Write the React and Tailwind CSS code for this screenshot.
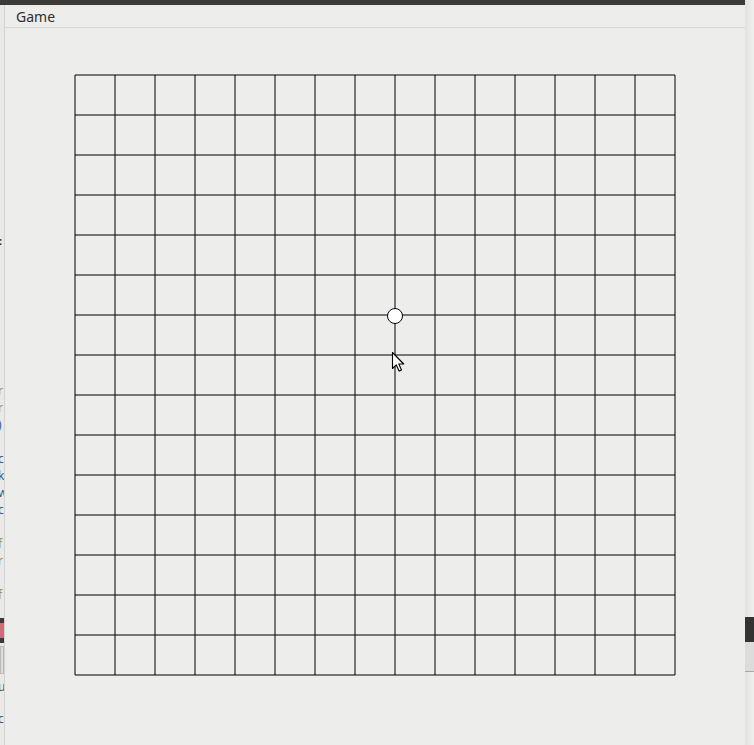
import React from "react";

function Board() {
  const x0 = 70, y0 = 47, cell = 40, n = 15;
  const lines = [];
  for (let i = 0; i <= n; i++) {
    const x = x0 + i * cell;
    const y = y0 + i * cell;
    lines.push(<line key={"v" + i} x1={x} y1={y0} x2={x} y2={y0 + n * cell} stroke="#000" strokeWidth="1" />);
    lines.push(<line key={"h" + i} x1={x0} y1={y} x2={x0 + n * cell} y2={y} stroke="#000" strokeWidth="1" />);
  }
  return (
    <svg width="740" height="717" className="block">
      {lines}
      <circle cx="390" cy="288" r="7.5" fill="#fff" stroke="#000" strokeWidth="1" />
      <g transform="translate(387.5,324.5)">
        <path d="M0 0 L0 16 L3.8 12.4 L6.6 18.6 L9 17.5 L6.3 11.5 L11.2 11.5 Z" fill="#fff" stroke="#000" strokeWidth="1.1" strokeLinejoin="round" />
      </g>
    </svg>
  );
}

function Frag({ c, color }) {
  return (
    <div className="h-[17px] leading-[17px] text-[12px] overflow-hidden whitespace-nowrap" style={{ color }}>
      <span className="inline-block -ml-[2px]">{c}</span>
    </div>
  );
}

export default function App() {
  const olive = "#9c962a";
  const blue = "#3a5a8c";
  return (
    <div className="flex w-[754px] h-[745px] overflow-hidden bg-[#ededec]" style={{ fontFamily: "'Noto Sans', 'DejaVu Sans', sans-serif" }}>
      <div className="flex flex-col w-[745px] h-[745px]">
        <div className="h-[5px] bg-[#3c3b37]" />
        <div className="flex flex-1">
          <div className="w-[5px] bg-[#e9e9e8] border-r border-[#d3d3d2] flex flex-col overflow-hidden">
            <div className="h-[230px]" />
            <div className="h-[12px] text-[11px] leading-[12px] text-[#3a3020] font-bold overflow-hidden">
              <span className="inline-block -ml-[1px]">:</span>
            </div>
            <div className="h-[135px]" />
            <Frag c="r" color={olive} />
            <Frag c="r" color={olive} />
            <Frag c=")" color={blue} />
            <div className="h-[17px]" />
            <Frag c="c" color={blue} />
            <Frag c="k" color={blue} />
            <Frag c="w" color={blue} />
            <Frag c="c" color={blue} />
            <div className="h-[17px]" />
            <Frag c="f" color={olive} />
            <Frag c="r" color={olive} />
            <div className="h-[17px]" />
            <Frag c="f" color={olive} />
            <div className="h-[15px]" />
            <div className="h-[25px] bg-[#3a3a3a] flex flex-col justify-center">
              <div className="h-[15px] bg-[#d46a78]" />
            </div>
            <div className="h-[3px]" />
            <div className="h-[28px] bg-[#dedede] border border-[#b8b8b8]" />
            <div className="h-[4px]" />
            <Frag c="u" color="#555" />
            <div className="h-[15px]" />
            <Frag c="c" color="#555" />
          </div>
          <div className="w-[740px] flex flex-col bg-[#ededec]">
            <div className="h-[22px] flex items-center pl-[11px] text-[14px] text-[#2e2e2e]">Game</div>
            <div className="h-px bg-[#d6d6d5]" />
            <Board />
          </div>
        </div>
      </div>
      <div className="w-[9px] h-[745px] flex flex-col bg-gradient-to-r from-[#e2e2e1] to-[#f0f0ef]">
        <div className="h-[617px]" />
        <div className="h-[25px] bg-[#333333]" />
        <div className="h-[30px] bg-[#dcdcdc] border-b border-[#a9a9a9]" />
      </div>
    </div>
  );
}
